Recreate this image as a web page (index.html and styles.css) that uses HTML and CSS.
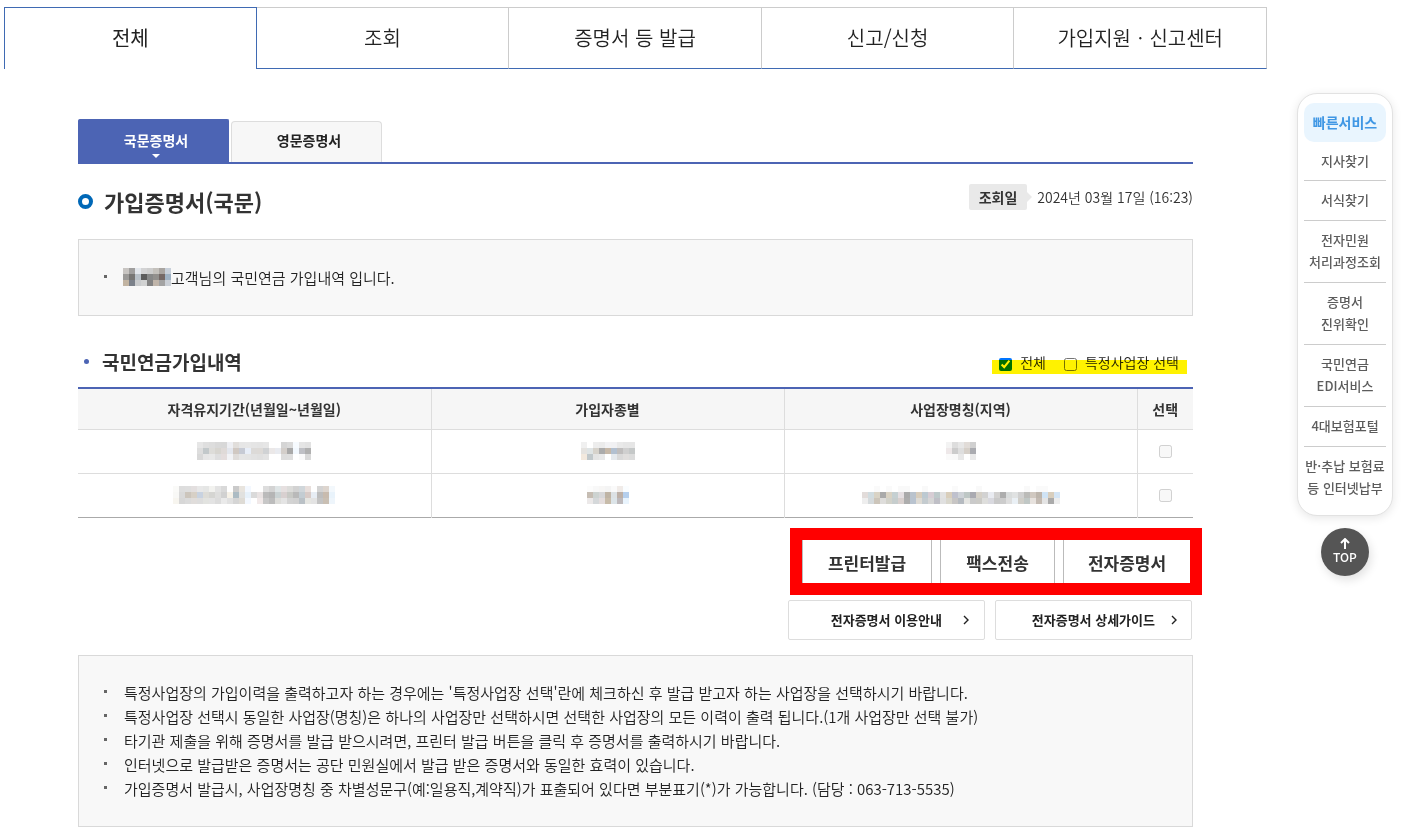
FILE: index.html
```html
<!DOCTYPE html>
<html lang="ko">
<head>
<meta charset="utf-8">
<title>가입증명서(국문)</title>
<link rel="stylesheet" href="styles.css">
</head>
<body>
<div class="page">
  <main class="main">
    <nav class="tabs">
      <a class="tab tab-on" href="#all">전체</a>
      <a class="tab" href="#search">조회</a>
      <a class="tab" href="#issue">증명서 등 발급</a>
      <a class="tab" href="#report">신고/신청</a>
      <a class="tab" href="#center">가입지원ㆍ신고센터</a>
    </nav>
    <div class="content">
      <nav class="subtabs">
        <a class="subtab subtab-on" href="#ko">국문증명서</a>
        <a class="subtab" href="#en">영문증명서</a>
      </nav>
      <header class="title-row">
        <h1 class="title">가입증명서(국문)</h1>
        <p class="date"><strong class="date-label">조회일</strong><span>2024년 03월 17일 (16:23)</span></p>
      </header>
      <ul class="notice notice-greeting">
        <li><svg class="mosaic" data-mask="name"></svg>고객님의 국민연금 가입내역 입니다.</li>
      </ul>
      <div class="section-row">
        <h2 class="section-title">국민연금가입내역</h2>
        <div class="filters">
          <label class="filter"><input class="check" type="checkbox" checked>전체</label>
          <label class="filter"><input class="check" type="checkbox">특정사업장 선택</label>
        </div>
      </div>
      <table class="history">
        <colgroup><col><col><col><col class="col-select"></colgroup>
        <thead>
          <tr><th>자격유지기간(년월일~년월일)</th><th>가입자종별</th><th>사업장명칭(지역)</th><th>선택</th></tr>
        </thead>
        <tbody>
          <tr>
            <td><svg class="mosaic" data-mask="period1"></svg></td>
            <td><svg class="mosaic" data-mask="type1"></svg></td>
            <td><svg class="mosaic" data-mask="place1"></svg></td>
            <td><input class="check" type="checkbox" aria-label="첫 번째 내역 선택" disabled></td>
          </tr>
          <tr>
            <td><svg class="mosaic" data-mask="period2"></svg></td>
            <td><svg class="mosaic" data-mask="type2"></svg></td>
            <td><svg class="mosaic" data-mask="place2"></svg></td>
            <td><input class="check" type="checkbox" aria-label="두 번째 내역 선택" disabled></td>
          </tr>
        </tbody>
      </table>
      <div class="issue">
        <button class="issue-btn issue-print" type="button">프린터발급</button>
        <button class="issue-btn issue-fax" type="button">팩스전송</button>
        <button class="issue-btn issue-digital" type="button">전자증명서</button>
      </div>
      <div class="guides">
        <a class="guide" href="#use">전자증명서 이용안내<svg class="chevron" viewBox="0 0 6 10"><path d="M1 1l4 4-4 4"/></svg></a>
        <a class="guide" href="#detail">전자증명서 상세가이드<svg class="chevron" viewBox="0 0 6 10"><path d="M1 1l4 4-4 4"/></svg></a>
      </div>
      <ul class="notice">
        <li>특정사업장의 가입이력을 출력하고자 하는 경우에는 '특정사업장 선택'란에 체크하신 후 발급 받고자 하는 사업장을 선택하시기 바랍니다.</li>
        <li>특정사업장 선택시 동일한 사업장(명칭)은 하나의 사업장만 선택하시면 선택한 사업장의 모든 이력이 출력 됩니다.(1개 사업장만 선택 불가)</li>
        <li>타기관 제출을 위해 증명서를 발급 받으시려면, 프린터 발급 버튼을 클릭 후 증명서를 출력하시기 바랍니다.</li>
        <li>인터넷으로 발급받은 증명서는 공단 민원실에서 발급 받은 증명서와 동일한 효력이 있습니다.</li>
        <li>가입증명서 발급시, 사업장명칭 중 차별성문구(예:일용직,계약직)가 표출되어 있다면 부분표기(*)가 가능합니다. (담당 : 063-713-5535)</li>
      </ul>
    </div>
  </main>
  <aside class="side">
    <nav class="quick">
      <h2 class="quick-title">빠른서비스</h2>
      <a class="quick-link" href="#q1">지사찾기</a>
      <a class="quick-link" href="#q2">서식찾기</a>
      <a class="quick-link" href="#q3">전자민원<br>처리과정조회</a>
      <a class="quick-link" href="#q4">증명서<br>진위확인</a>
      <a class="quick-link" href="#q5">국민연금<br>EDI서비스</a>
      <a class="quick-link" href="#q6">4대보험포털</a>
      <a class="quick-link" href="#q7">반·추납 보험료<br>등 인터넷납부</a>
    </nav>
    <a class="top" href="#"><svg class="arrow" viewBox="0 0 10 11"><path d="M5 11V2M1 5l4-4 4 4"/></svg>TOP</a>
  </aside>
</div>
<script src="mosaic.js"></script>
</body>
</html>
```
FILE: styles.css
```css
*, *::before, *::after { box-sizing: border-box; }
body {
  margin: 0;
  background: #fff;
  color: #333;
  font-family: "Noto Sans CJK KR", "Noto Sans", sans-serif;
  font-size: 14px;
  line-height: 24px;
}
a { color: inherit; text-decoration: none; }
h1, h2, p, ul { margin: 0; padding: 0; }

.page { display: flex; align-items: flex-start; gap: 30px; padding: 7px 28px 13px 4px; }
.main { flex: 1; min-width: 0; }

.tabs { display: grid; grid-template-columns: repeat(5, 1fr); }
.tab {
  height: 62px;
  border: solid #ccc;
  border-width: 1px 1px 1px 0;
  border-bottom-color: #3f6ab3;
  color: #222;
  font-size: 20px;
  font-weight: 350;
  line-height: 60px;
  text-align: center;
}
.tab-on { border-color: #3f6ab3; border-width: 1px 1px 0 1px; font-weight: 400; }

.content { padding: 50px 74px 0; }

.subtabs { display: flex; align-items: flex-end; gap: 2px; border-bottom: 2px solid #4c64b4; }
.subtab {
  width: 151px;
  height: 41px;
  border: 1px solid #ddd;
  border-bottom: 0;
  border-radius: 4px 4px 0 0;
  background: #f7f7f7;
  color: #222;
  font-weight: 700;
  line-height: 36px;
  padding-left: 5px;
  text-align: center;
}
.subtab-on {
  position: relative;
  height: 43px;
  border-color: #4c64b4;
  border-radius: 2px 2px 0 0;
  background: #4c64b4;
  color: #fff;
  line-height: 40px;
}
.subtab-on::after {
  content: "";
  position: absolute;
  left: 73px;
  bottom: 4px;
  border: 4px solid transparent;
  border-top-color: #fff;
  border-bottom: 0;
}

.title-row { display: flex; justify-content: space-between; padding: 20px 0 21px; }
.title { display: flex; align-items: center; gap: 11px; font-size: 22px; line-height: 34px; }
.title::before { content: ""; width: 15px; height: 15px; border: 4px solid #0068b7; border-radius: 50%; }
.date { display: flex; height: 26px; gap: 10px; font-weight: 350; line-height: 27px; }
.date-label { position: relative; padding: 0 10px; border-radius: 2px; background: #e9e9e9; font-weight: 700; }
.date-label::after {
  content: "";
  position: absolute;
  left: 100%;
  top: 8px;
  border: 5px solid transparent;
  border-left-color: #e9e9e9;
  border-right: 0;
}

.notice {
  list-style: none;
  padding: 25px 20px 25px 45px;
  border: 1px solid #d9d9d9;
  background: #f8f8f8;
  color: #222;
  font-size: 15px;
  font-weight: 350;
}
.notice-greeting { padding-top: 26px; }
.notice li { position: relative; }
.notice li::before {
  content: "";
  position: absolute;
  left: -20px;
  top: 9px;
  width: 3px;
  height: 3px;
  background: #666;
}

.section-row { display: flex; justify-content: space-between; align-items: center; padding: 28px 6px 8px; }
.section-title { display: flex; align-items: center; gap: 13px; font-size: 19px; line-height: 35px; }
.section-title::before { content: ""; width: 5px; height: 5px; border-radius: 50%; background: #4c64b4; }
.filters { position: relative; display: flex; gap: 18px; padding: 0 8px 0 7px; color: #222; font-weight: 350; }
.filters::after {
  content: "";
  position: absolute;
  inset: 10px 0 0;
  background: #fff200;
  mix-blend-mode: multiply;
  pointer-events: none;
}
.filter { display: flex; align-items: center; gap: 8px; }
.check { width: 13px; height: 13px; margin: 0; }
.filter .check { margin-top: 5px; }

.history { width: 100%; border-collapse: collapse; table-layout: fixed; border-top: 2px solid #4c64b4; border-bottom: 1px solid #aaa; }
.col-select { width: 56px; }
.history th, .history td { padding: 0; border-left: 1px solid #ddd; text-align: center; }
.history th:first-child, .history td:first-child { border-left: 0; }
.history th { height: 41px; background: #f6f6f6; }
.history td { height: 44px; border-top: 1px solid #ddd; }
.history .check { display: block; margin: 0 auto; }

.mosaic { display: inline-block; margin-top: -4px; vertical-align: middle; }
.notice .mosaic { margin: -6px 0 0 -1px; }

.issue {
  display: flex;
  gap: 8px;
  width: fit-content;
  margin: 10px -9px 5px auto;
  border: 12px solid #f00;
  background: #fff;
}
.issue-btn {
  height: 43px;
  padding: 2px 0 0;
  border: solid #bbb;
  border-width: 0 1px;
  background: #fff;
  color: #333;
  font-family: inherit;
  font-size: 17px;
  font-weight: 700;
}
.issue-print { width: 130px; }
.issue-fax { width: 115px; }
.issue-digital { width: 127px; border-right: 0; }

.guides { display: flex; justify-content: flex-end; gap: 10px; padding: 0 1px 15px; }
.guide {
  display: flex;
  align-items: center;
  justify-content: flex-end;
  gap: 21px;
  width: 197px;
  height: 40px;
  padding-right: 15px;
  border: 1px solid #ddd;
  border-radius: 2px;
  color: #222;
  font-size: 13px;
  font-weight: 700;
}
.chevron { width: 6px; height: 10px; fill: none; stroke: #222; stroke-width: 1.4; }
.guide + .guide { gap: 16px; padding-right: 14px; }

.side { width: 96px; margin-top: 86px; }
.quick {
  padding: 9px 6px 7px;
  border: 1px solid #e2e2e2;
  border-radius: 20px;
  background: #fff;
  box-shadow: 0 2px 10px rgba(0, 0, 0, 0.1);
  color: #5c5c5c;
  font-size: 13px;
  font-weight: 500;
  line-height: 22px;
  text-align: center;
}
.quick-title { border-radius: 10px; background: #e9f5fe; color: #4097e4; font-size: 14px; line-height: 39px; }
.quick-link { display: block; padding: 8px 0 9px; border-bottom: 1px solid #ccc; white-space: nowrap; }
.quick-title + .quick-link { padding-bottom: 8px; }
.quick-link:last-child { border-bottom: 0; }
.top {
  display: flex;
  flex-direction: column;
  align-items: center;
  width: 48px;
  height: 48px;
  margin: 12px auto 0;
  padding-top: 10px;
  border-radius: 50%;
  background: #555;
  box-shadow: 2px 4px 10px rgba(0, 0, 0, 0.12);
  color: #fff;
  font-size: 12px;
  font-weight: 500;
  line-height: 16px;
}
.arrow { flex: none; width: 10px; height: 11px; fill: none; stroke: #fff; stroke-width: 2; }
```
FILE: mosaic.js
```js
// Masked values: each row is a list of 6px cells, "-" leaves a cell empty.
const masks = {
  name: [
    "c8c5c2 a09f9e e3e7ec d3d3d4 cdcdcd c4c1bc a9a5a1 c8d0da",
    "9b9a98 777674 b9c1c8 5c5c5c 878888 92908d 756966 9fb2c4",
    "c2b4a2 7b818a c9cbcd d1d2d2 838383 c0b5aa a3a3a3 cacfd6"
  ],
  period1: [
    "e6e6e6 dfdfdf dddddd d9d9d9 d8d8d8 eeeff3 e1dedb e6e6e6 e7e7e7 e5e5e5 e4e4e4 e6e6e6 - - d5d5d5 dadada f7fbff e5e5e5 e2e2e2",
    "dddddd c2c8ca dddcd9 d7d5d0 dfdad8 e3e6ed d0c8c2 c6cad4 e8eef8 dcdad8 dddad7 d0d2d4 ebe8e8 e9ebf0 d3ceca a9a9a9 f2f8fe bfc0c5 b0b0b0",
    "d8d8d8 e6e6e6 e8e8e8 dededf e4dddd f2f3f6 dfdcda e5e5e5 e4e4e4 e2e2e2 e0e0e0 e3e3e3 - - dddddd dedede - fafafa d9d9d9"
  ],
  type1: [
    "f0f0f0 - ededed ebebeb f2f2f4 f1f1f3 e9e9e9 e6e6e6 e6e6e6",
    "e5e3e0 dfe4e5 d6d2cb ababab c6b8a8 b2c0d0 bfbdbd cfcfcf c5c8c8",
    "f3e9de c1c8cb e4e4e4 e8e8e8 - e5e9ed d9d9d9 e0dedd dcdcdc"
  ],
  place1: [
    "f3f3f3 dddddd e7e7e7 e1dcd8 d0d0d0",
    "eee8e9 cccccc dedede d6d0c9 aaabb0",
    "fafafa f9f9f9 e8e8e8 - e9e9e9"
  ],
  period2: [
    "fafaf8 dddddd dedede e3dfdf e8e8e8 e5e6e5 f2f2ef e3e3e3 d9d9d9 - cacaca e8e4de f3f8ff - - dddddd d3d3d3 dfe5e6 e6e0e0 dcdcda d2d2d2 d0d6da e8dfdc - d3d3d3 ddd5ce f3f8fc",
    "f8f8f6 d9d9d9 ccc5bc d7d0c6 c8d2e0 dddcd7 d5d5d2 dededd d1d1d1 f6f1e7 acbbc3 e1e1df e7f1fa dadada e9e3e3 bbbbbb b5b5b5 cad2d3 d8d0d0 c8c9c5 b9b9b9 c3ccd2 d8cbc7 e7edf4 bdbdbd c8bbae e9f3fb",
    "f7f5ef d7d7d7 dbdbdb e0dddb dddddd e2e3e0 e3e3e3 dcdcdc eaeaea e1e1e1 d5d5d5 dedbd5 f3f8ff - f1e9e9 c7c7c7 bcbcbc ddddda e4e4e4 d3d3d3 d1d1d1 bac1c6 e6e6e2 e3e3e3 c3c3c3 c9bfb3 eef5fb"
  ],
  type2: [
    "fcfcfc f8f8f8 f7f6f5 f4f4f4 fafafa f0ebe8 fafdff",
    "c6bdb3 cdd3d1 d7d7d9 bfb4a5 dce1e4 bdb0a7 b5cfed",
    "ece9e9 d5d8da e4dddd c7bba9 dce4e8 bdb9bc e9f4fd"
  ],
  place2: [
    "- - fafafa - fafafa - f9f9f9 f9f9f9 - - f9f9f9 - - - - fafafa - - - f9f9f9 - - - - - - - f9f9f9 - fafafa fafafa - -",
    "e2dcda d1dce0 d9d3c5 aaaaaa d9d2c3 c5d0d2 e5dfe2 aaaaaa bac3cd d8cdbc bcc9d1 d7cdd4 bec9ca e2e2e2 d9cebb bfc1cd ced2d7 bec7c5 aaaab1 d5d0c7 d2d2d2 e9ebf1 d2d1d0 adadad d9dcdc e0e2e2 d0d0d0 bbbbb8 d0c8c0 bdb5ac cfe3f5 d8cebd d4e5f5",
    "eeeeee d5dadc ccc5ba dedddb d2d2ca c6cdcd d9d0ce adadad b9c3cf dedbd5 c4cbcf d6d6d6 bfbfc6 e0e0e0 d9d7cd c7c5c4 b5bac0 e5e5e2 cacaca cccbc7 dededc d9d9df c9c9c9 cccccc dedede eaf0f5 d0cec8 c0c7c5 e7e2de c3bab2 e4e4e4 aaaaaa ededed"
  ]
};

const cell = 6;
document.querySelectorAll(".mosaic").forEach((svg) => {
  const rows = masks[svg.dataset.mask].map((row) => row.split(" "));
  svg.setAttribute("width", rows[0].length * cell);
  svg.setAttribute("height", rows.length * cell);
  rows.forEach((row, y) => row.forEach((color, x) => {
    if (color === "-") return;
    const rect = document.createElementNS("http://www.w3.org/2000/svg", "rect");
    rect.setAttribute("x", x * cell);
    rect.setAttribute("y", y * cell);
    rect.setAttribute("width", cell);
    rect.setAttribute("height", cell);
    rect.setAttribute("fill", "#" + color);
    svg.append(rect);
  }));
});
```
